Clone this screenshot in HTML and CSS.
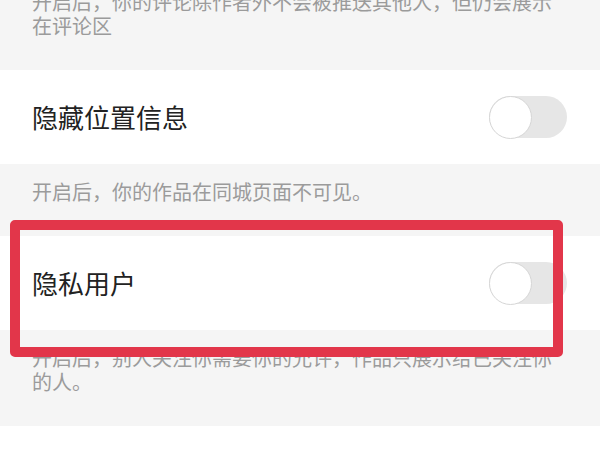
FILE: index.html
```html
<!DOCTYPE html>
<html lang="zh-CN">
<head>
<meta charset="utf-8">
<link rel="stylesheet" href="styles.css">
</head>
<body>
<div class="page">
  <div class="desc">开启后，你的评论除作者外不会被推送其他人，但仍会展示在评论区</div>
  <div class="row">
    <span class="title">隐藏位置信息</span>
    <span class="switch"><span class="knob"></span></span>
  </div>
  <div class="desc">开启后，你的作品在同城页面不可见。</div>
  <div class="row highlighted">
    <span class="title">隐私用户</span>
    <span class="switch"><span class="knob"></span></span>
    <span class="mark"></span>
  </div>
  <div class="desc">开启后，别人关注你需要你的允许，作品只展示给已关注你的人。</div>
  <div class="row blank"></div>
</div>
</body>
</html>
```

FILE: styles.css
```css
html, body {
  margin: 0;
  padding: 0;
  background: #ffffff;
}
body {
  width: 600px;
  height: 450px;
  overflow: hidden;
  font-family: "Noto Sans CJK SC", "Noto Sans", sans-serif;
}
.page {
  margin-top: -26px;
  display: flex;
  flex-direction: column;
}
.desc {
  background: #f5f5f5;
  color: #9b9b9b;
  font-size: 20px;
  line-height: 24px;
  padding: 16px 38px 32px 32px;
}
.row {
  height: 94px;
  background: #ffffff;
  display: flex;
  align-items: center;
  justify-content: space-between;
  padding: 0 33px 0 32px;
}
.row.blank {
  height: 24px;
}
.highlighted {
  position: relative;
}
.title {
  font-size: 26px;
  color: #222222;
  line-height: 30px;
}
.switch {
  width: 78px;
  height: 42px;
  border-radius: 21px;
  background: #e6e6e6;
  display: flex;
  align-items: center;
  box-sizing: border-box;
}
.knob {
  width: 43px;
  height: 43px;
  border-radius: 50%;
  background: #ffffff;
  border: 1.5px solid #d6d6d6;
  box-sizing: border-box;
}
.mark {
  position: absolute;
  top: -16px;
  left: 10px;
  right: 37px;
  bottom: -27px;
  border: 10px solid #e2364a;
  border-radius: 5px;
  pointer-events: none;
}
```
